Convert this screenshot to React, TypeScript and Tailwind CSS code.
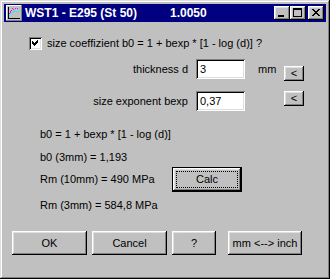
import React from "react";

const raised =
  "bg-[#c0c0c0] shadow-[inset_-1px_-1px_#000,inset_1px_1px_#fff,inset_-2px_-2px_#808080,inset_2px_2px_#dfdfdf]";
const sunken =
  "bg-white shadow-[inset_1px_1px_#808080,inset_-1px_-1px_#fff,inset_2px_2px_#000,inset_-2px_-2px_#dfdfdf]";

function AppIcon() {
  return (
    <svg width="16" height="16" viewBox="0 0 16 16" shapeRendering="crispEdges">
      <rect x="0" y="0" width="16" height="16" fill="#c0c0c0" />
      <rect x="0" y="0" width="16" height="1" fill="#fff" />
      <rect x="0" y="0" width="1" height="16" fill="#fff" />
      <rect x="15" y="0" width="1" height="16" fill="#808080" />
      <rect x="0" y="15" width="16" height="1" fill="#808080" />
      <rect x="2" y="2" width="1" height="12" fill="#000" />
      <rect x="2" y="13" width="12" height="1" fill="#000" />
      <path d="M3 11 L7 7 L13 6" stroke="#00ffff" strokeWidth="1" fill="none" />
      <path d="M3 9 L6 5 L9 4 L13 3" stroke="#ff00ff" strokeWidth="1" strokeDasharray="1 1" fill="none" />
      <rect x="6" y="3" width="1" height="1" fill="#ff00ff" />
    </svg>
  );
}

function CaptionButton({ kind }: { kind: "min" | "max" | "close" }) {
  return (
    <div className={`w-[16px] h-[14px] ${raised} relative`}>
      {kind === "min" && <div className="absolute left-[4px] top-[9px] w-[6px] h-[2px] bg-black" />}
      {kind === "max" && (
        <div className="absolute left-[3px] top-[2px] w-[9px] h-[9px] border border-black border-t-2" />
      )}
      {kind === "close" && (
        <svg className="absolute left-[4px] top-[3px]" width="8" height="7" viewBox="0 0 8 7" shapeRendering="crispEdges">
          <path d="M0 0h2v1h-2zM6 0h2v1h-2zM1 1h2v1h-2zM5 1h2v1h-2zM2 2h4v1h-4zM3 3h2v1h-2zM2 4h4v1h-4zM1 5h2v1h-2zM5 5h2v1h-2zM0 6h2v1h-2zM6 6h2v1h-2z" fill="#000" />
        </svg>
      )}
    </div>
  );
}

function Button({ label, className }: { label: string; className: string }) {
  return (
    <div className={`${raised} flex items-center justify-center text-black ${className}`}>{label}</div>
  );
}

export default function App() {
  return (
    <div
      className="w-[330px] h-[279px] bg-[#c0c0c0] p-[4px] flex flex-col text-[11px] leading-[13px] text-black shadow-[inset_-1px_-1px_#000,inset_1px_1px_#dfdfdf,inset_-2px_-2px_#808080,inset_2px_2px_#fff]"
      style={{ fontFamily: '"Liberation Sans", Arial, sans-serif' }}
    >
      {/* title bar */}
      <div className="h-[18px] bg-[#000080] flex items-center pl-[2px] pr-[2px] shrink-0">
        <AppIcon />
        <div className="ml-[3px] w-[145px] text-white font-bold text-[12px]">WST1 - E295 (St 50)</div>
        <div className="text-white font-bold text-[12px]">1.0050</div>
        <div className="ml-auto flex">
          <CaptionButton kind="min" />
          <CaptionButton kind="max" />
          <div className="w-[2px]" />
          <CaptionButton kind="close" />
        </div>
      </div>

      {/* checkbox */}
      <div className="mt-[15px] ml-[25px] flex items-center gap-[5px] h-[13px]">
        <div className={`w-[13px] h-[13px] ${sunken} relative shrink-0`}>
          <svg className="absolute left-[3px] top-[3px]" width="7" height="7" viewBox="0 0 7 7" shapeRendering="crispEdges">
            <path d="M6 0v3h-1v1h-1v1h-1v1h-1v-1h-1v-1h-1v-3h1v1h1v1h1v-1h1v-1h1v-1z" fill="#000" />
          </svg>
        </div>
        <span>size coeffizient b0 = 1 + bexp * [1 - log (d)] ?</span>
      </div>

      {/* thickness */}
      <div className="mt-[9px] flex items-start h-[20px]">
        <div className="w-[184px] h-[20px] flex items-center justify-end">thickness d</div>
        <div className={`ml-[8px] w-[49px] h-[20px] ${sunken} flex items-center pl-[4px]`}>3</div>
        <div className="ml-[13px] w-[26px] h-[20px] flex items-center">mm</div>
        <Button label="<" className="mt-[7px] w-[20px] h-[15px]" />
      </div>

      {/* exponent */}
      <div className="mt-[12px] flex items-start h-[20px]">
        <div className="w-[184px] h-[20px] flex items-center justify-end">size exponent bexp</div>
        <div className={`ml-[8px] w-[49px] h-[20px] ${sunken} flex items-center pl-[4px]`}>0,37</div>
        <div className="ml-[13px] w-[26px] h-[20px]" />
        <Button label="<" className="w-[20px] h-[15px]" />
      </div>

      {/* results */}
      <div className="mt-[17px] ml-[36px] h-[13px]">b0 = 1 + bexp * [1 - log (d)]</div>
      <div className="mt-[10px] ml-[36px] h-[13px]">b0 (3mm) = 1,193</div>
      <div className="mt-[3px] flex items-center h-[25px]">
        <div className="ml-[36px] w-[132px]">Rm (10mm) = 490 MPa</div>
        <div className="w-[70px] h-[25px] border border-black">
          <div className={`${raised} w-full h-full p-[3px]`}>
            <div className="w-full h-full border border-dotted border-black flex items-center justify-center">
              Calc
            </div>
          </div>
        </div>
      </div>
      <div className="mt-[7px] ml-[36px] h-[13px]">Rm (3mm) = 584,8 MPa</div>

      {/* bottom buttons */}
      <div className="mt-[19px] ml-[8px] flex h-[24px]">
        <Button label="OK" className="w-[75px] h-[24px]" />
        <Button label="Cancel" className="ml-[5px] w-[75px] h-[24px]" />
        <Button label="?" className="ml-[5px] w-[44px] h-[24px]" />
        <Button label="mm <--> inch" className="ml-[12px] w-[74px] h-[24px]" />
      </div>
    </div>
  );
}
